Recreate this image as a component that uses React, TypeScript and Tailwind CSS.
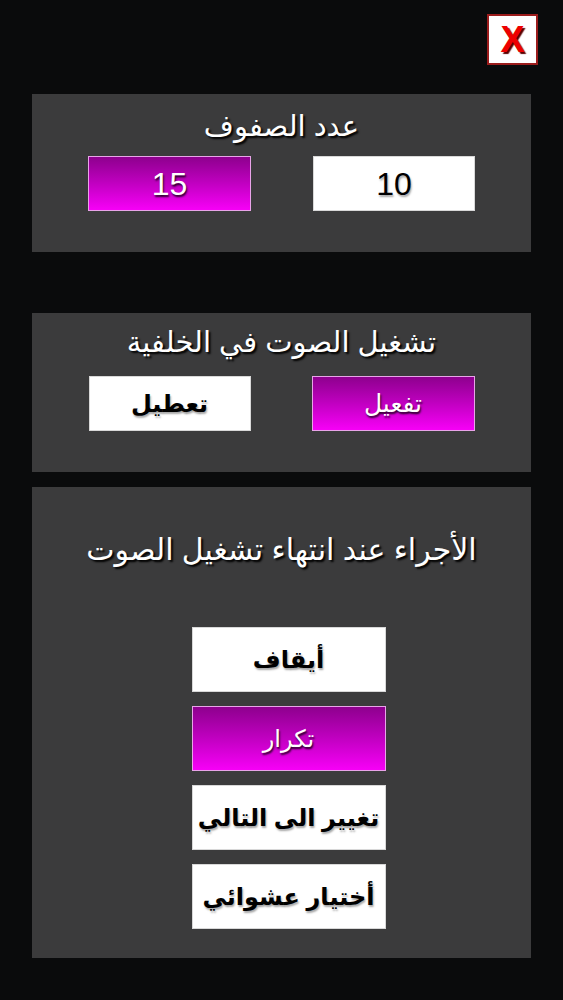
import { useState } from 'react';

const font = { fontFamily: '"Liberation Sans", "DejaVu Sans", sans-serif' };

function Choice({
  label,
  active,
  onClick,
  className,
}: {
  label: string;
  active: boolean;
  onClick: () => void;
  className: string;
}) {
  return (
    <button
      onClick={onClick}
      className={
        active
          ? `flex items-center justify-center border border-[#e8a3e8] bg-gradient-to-b from-[#8e008e] to-[#f700f7] text-white [text-shadow:1px_2px_2px_rgba(0,0,0,0.8)] ${className}`
          : `flex items-center justify-center border border-[#d8d8d8] bg-white font-bold text-black [text-shadow:1px_2px_2px_rgba(0,0,0,0.35)] ${className}`
      }
    >
      {label}
    </button>
  );
}

export default function App() {
  const [rows, setRows] = useState(15);
  const [bgSound, setBgSound] = useState(true);
  const [endAction, setEndAction] = useState('repeat');

  const actions = [
    { id: 'stop', label: 'أيقاف' },
    { id: 'repeat', label: 'تكرار' },
    { id: 'next', label: 'تغيير الى التالي' },
    { id: 'random', label: 'أختيار عشوائي' },
  ];

  return (
    <div style={font} className="min-h-[1000px] w-full bg-[#0a0b0c] pt-[14px]">
      {/* close */}
      <div className="flex justify-end pr-[25px]">
        <button className="flex h-[51px] w-[51px] items-center justify-center border-2 border-[#9b1c1c] bg-white text-[36px] font-bold leading-none text-[#ee0000] [text-shadow:2px_2px_1px_#5a0000]">
          X
        </button>
      </div>

      {/* rows count */}
      <section className="mx-[32px] mt-[29px] h-[158px] bg-[#3b3b3c] pt-[8px]">
        <h2 className="flex h-[50px] items-center justify-center text-[29px] text-white [text-shadow:2px_2px_2px_#000]">
          عدد الصفوف
        </h2>
        <div className="mt-[4px] flex justify-center gap-[62px]">
          <Choice label="15" active={rows === 15} onClick={() => setRows(15)} className="h-[55px] w-[163px] text-[32px]" />
          <Choice label="10" active={rows === 10} onClick={() => setRows(10)} className="h-[55px] w-[162px] text-[32px] !font-normal" />
        </div>
      </section>

      {/* background sound */}
      <section className="mx-[32px] mt-[61px] h-[159px] bg-[#3b3b3c] pt-[6px]">
        <h2 className="flex h-[48px] items-center justify-center text-[29px] text-white [text-shadow:2px_2px_2px_#000]">
          تشغيل الصوت في الخلفية
        </h2>
        <div className="mt-[9px] flex justify-center gap-[61px]">
          <Choice label="تعطيل" active={!bgSound} onClick={() => setBgSound(false)} className="h-[55px] w-[162px] text-[24px]" />
          <Choice label="تفعيل" active={bgSound} onClick={() => setBgSound(true)} className="h-[55px] w-[163px] text-[25px]" />
        </div>
      </section>

      {/* end of playback action */}
      <section className="mx-[32px] mt-[15px] h-[471px] bg-[#3b3b3c] pt-[40px]">
        <h2 className="flex h-[44px] items-center justify-center text-[30px] text-white [text-shadow:2px_2px_2px_#000]">
          الأجراء عند انتهاء تشغيل الصوت
        </h2>
        <div className="mt-[56px] flex flex-col items-center gap-[14px] pl-[14px]">
          {actions.map((a) => (
            <Choice
              key={a.id}
              label={a.label}
              active={endAction === a.id}
              onClick={() => setEndAction(a.id)}
              className="h-[65px] w-[194px] text-[24px]"
            />
          ))}
        </div>
      </section>
    </div>
  );
}
